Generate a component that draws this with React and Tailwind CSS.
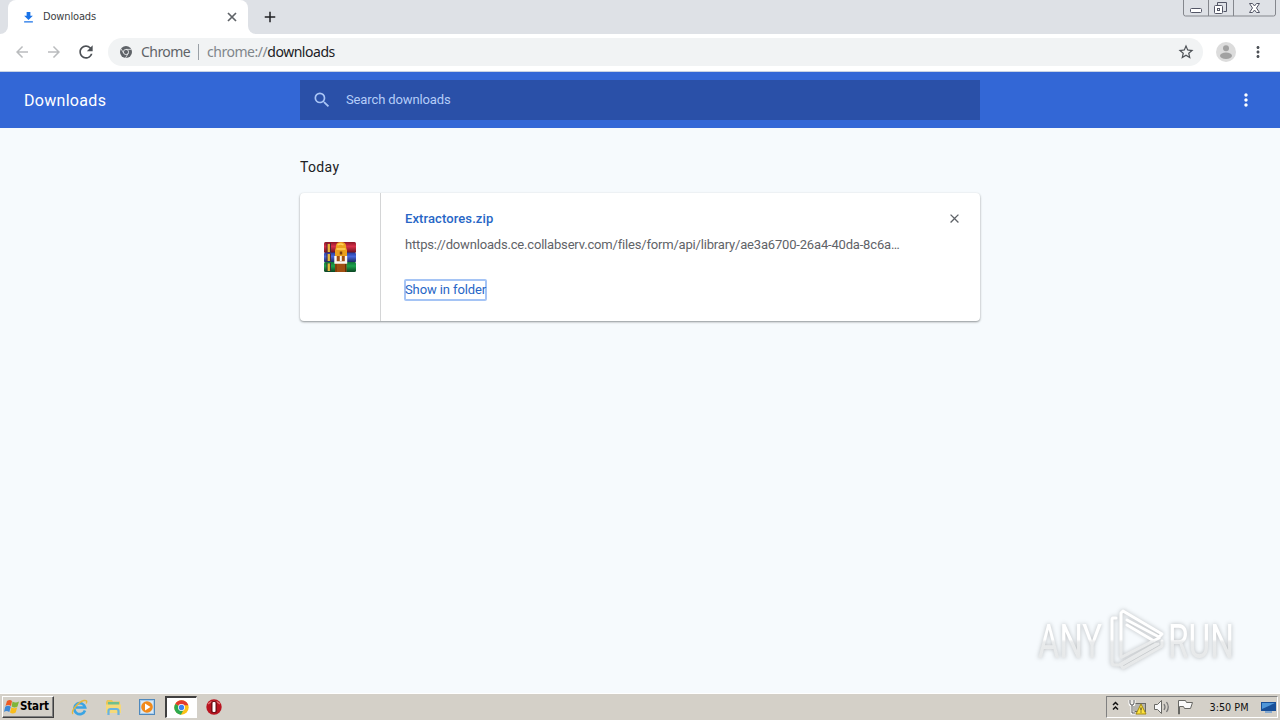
import React from 'react';
import { MdArrowBack, MdArrowForward, MdRefresh, MdStarBorder, MdMoreVert, MdSearch, MdClose, MdAdd, MdFileDownload } from 'react-icons/md';

const url = 'https://downloads.ce.collabserv.com/files/form/api/library/ae3a6700-26a4-40da-8c6a…';

const ChromeMono = () => (
  <svg className="w-3 h-3" viewBox="0 0 24 24">
    <circle cx="12" cy="12" r="12" fill="#5f6368" />
    <circle cx="12" cy="12" r="5.2" fill="none" stroke="#f1f3f4" strokeWidth="1.6" />
    <path d="M12 6.8h11M7.5 14.6L2 5.5M16.5 14.6L11 24" stroke="#f1f3f4" strokeWidth="1.5" />
  </svg>
);

const ChromeIcon = () => (
  <svg className="w-[15px] h-[15px]" viewBox="0 0 48 48">
    <circle cx="24" cy="24" r="23" fill="#fbc116" />
    <path d="M24 24L4 12.500A23 23 0 0 1 44 12.500L46 17H24z" fill="#e33b2e" />
    <path d="M4 12.500A23 23 0 0 0 22 47L32 29 24 24z" fill="#2da94f" />
    <circle cx="24" cy="24" r="11" fill="#fff" />
    <circle cx="24" cy="24" r="8.500" fill="#3e82f1" />
  </svg>
);

const WinRarIcon = () => (
  <svg className="w-8 h-8" viewBox="0 0 32 32">
    <defs>
      <linearGradient id="red" x2="0" y2="1">
        <stop offset="0" stopColor="#8c1626" />
        <stop offset=".4" stopColor="#d8304a" />
        <stop offset="1" stopColor="#65101c" />
      </linearGradient>
      <linearGradient id="blue" x2="0" y2="1">
        <stop offset="0" stopColor="#273c9c" />
        <stop offset=".4" stopColor="#4666db" />
        <stop offset="1" stopColor="#1b2459" />
      </linearGradient>
      <linearGradient id="green" x2="0" y2="1">
        <stop offset="0" stopColor="#12733a" />
        <stop offset=".4" stopColor="#1da34c" />
        <stop offset="1" stopColor="#0b4422" />
      </linearGradient>
    </defs>
    <rect y="1" width="32" height="11" rx="1.500" fill="url(#red)" />
    <rect y="11.500" width="32" height="10" rx="1.500" fill="url(#blue)" />
    <rect y="21" width="32" height="10" rx="1.500" fill="url(#green)" />
    <path d="M3 2v9M3 12.500v8M3 22v8M6.500 2v9M6.500 12.500v8M6.500 22v8" stroke="#4a2a32" />
    <path d="M4.800 3v8M4.800 13v7M4.800 22.500v7.500" stroke="#e8bb3a" strokeWidth="2.200" />
    <rect x="11" y="14" width="11.500" height="17" fill="#a14f12" />
    <path d="M11 15V9q1-2 1-4 0-4 5-4t5 4q0 2 1 4v6z" fill="#eca11d" />
    <path d="M13.500 4q3-2 6 0M12.500 8h9" fill="none" stroke="#ffd45c" strokeWidth="1.500" />
    <path d="M17 10.500v3" stroke="#7c3e0c" strokeWidth="2.500" />
    <path d="M11.500 15v6.500h10.500V15" fill="none" stroke="#fbf8f2" strokeWidth="2.400" />
    <path d="M16.800 15v5" stroke="#fbf8f2" strokeWidth="2" />
    <path d="M12 23v8M21.500 23v8" stroke="#693009" />
  </svg>
);

const Avatar = () => (
  <svg className="w-5 h-5" viewBox="0 0 20 20">
    <circle cx="10" cy="10" r="10" fill="#dcdcdc" />
    <circle cx="10" cy="6.200" r="3" fill="#a1a1a1" />
    <ellipse cx="10" cy="13.700" rx="6" ry="3.200" fill="#a1a1a1" />
  </svg>
);

const WindowButtons = () => (
  <svg className="w-[93px] h-[17px] mr-1" viewBox="0 0 93 17" fill="none">
    <path d="M.5 0v14q0 2 2 2h88q2 0 2-2V0M25.500 0v16M50.500 0v16" stroke="#84878d" />
    <rect x="7.500" y="8.500" width="11" height="4" rx="1" stroke="#535666" fill="#fff" />
    <path d="M34.500 5.500v-3h9v9h-3" stroke="#535666" />
    <rect x="31.500" y="5.500" width="8" height="8" rx="1" stroke="#535666" fill="#fff" />
    <rect x="34.500" y="8.500" width="2" height="2" stroke="#535666" />
    <path d="M66.500 3.500h3l2 2.500 2-2.500h3L73.500 8l3 4.500h-3l-2-2.500-2 2.500h-3l3-4.500z" stroke="#535666" fill="#fff" />
  </svg>
);

const StartFlag = () => (
  <svg className="w-4 h-4" viewBox="0 0 16 16">
    <path d="M3 2q3-2 5 0L7 7Q4 5 1.500 7z" fill="#ed5a23" />
    <path d="M8.500 2.500q3 2 6.500 0L13.500 7.500q-3 2-5.800 0z" fill="#7fb539" />
    <path d="M1.200 7.800q3-2 5.600 0l-1.500 5.200q-3-2-5.300 0z" fill="#3d88d5" />
    <path d="M7.500 8.300q3 2 5.700 0l-1.500 5.200q-3 2-5.700 0z" fill="#f9bd1c" />
  </svg>
);

const ExplorerE = () => (
  <svg className="w-[17px] h-[17px]" viewBox="0 0 17 17" fill="none">
    <path d="M14 11.500A5.500 5.500 0 1 1 14.200 8.500H5" stroke="#3ba4e3" strokeWidth="2.600" />
    <path d="M2 15C-1 13 7 3 13 1.500q4-.5 2.200 3" stroke="#e6b73b" strokeWidth="1.400" />
  </svg>
);

const FolderIcon = () => (
  <svg className="w-[17px] h-[17px]" viewBox="0 0 17 17">
    <path d="M1 3l1-2h5l1 1.500h7V14H1z" fill="#e9c65b" />
    <path d="M3 3h11v4H3z" fill="#6fbf8e" />
    <path d="M1 5.500h15V14H1z" fill="#f5d97a" />
    <path d="M3.500 16v-4q0-2 2-2h6q2 0 2 2v4" fill="none" stroke="#69b3df" strokeWidth="2.200" />
  </svg>
);

const MediaIcon = () => (
  <svg className="w-4 h-4" viewBox="0 0 16 16">
    <rect x=".5" y=".5" width="15" height="15" fill="#a9cdec" stroke="#4f89bd" />
    <rect x="2" y="2" width="12" height="12" fill="#d9e9f5" />
    <circle cx="8" cy="8" r="5.800" fill="#f18a1b" />
    <path d="M6 4.500v7L11.500 8z" fill="#fff" />
  </svg>
);

const OperaIcon = () => (
  <svg className="w-4 h-4" viewBox="0 0 16 16">
    <circle cx="8" cy="8" r="7.700" fill="#b91420" />
    <path d="M2 5a7 5 0 0 1 12 0" fill="none" stroke="#e26b6c" strokeWidth="1.500" />
    <rect x="5" y="2" width="6" height="12" rx="2" fill="#731017" />
    <rect x="6.500" y="3" width="3" height="10" rx="1" fill="#fff" />
  </svg>
);

const Watermark = () => (
  <svg className="absolute left-[1030px] top-[600px] w-[250px] h-20 drop-shadow-[0_0_2px_rgba(0,0,0,0.25)]" viewBox="0 0 250 80">
    <defs>
      <linearGradient id="fade" gradientUnits="userSpaceOnUse" x1="0" y1="20" x2="0" y2="66">
        <stop offset="0" stopColor="#fff" />
        <stop offset=".42" stopColor="#fff" />
        <stop offset=".48" stopColor="#e9ebec" />
        <stop offset="1" stopColor="#e6e8e9" />
      </linearGradient>
    </defs>
    <g fill="url(#fade)" fontFamily="Roboto" fontSize="49">
      <text x="8" y="58" textLength="64" lengthAdjust="spacingAndGlyphs">ANY</text>
      <text x="138" y="58" textLength="66" lengthAdjust="spacingAndGlyphs">RUN</text>
    </g>
    <g fill="none" stroke="url(#fade)" strokeWidth="3" strokeLinejoin="round" strokeLinecap="round">
      <path d="M86 18h-3q-1 0-1 2v42q0 3 3 3h4L126 44" />
      <path d="M91 57V13l2-2L132 34l-3 3L97 20" />
      <path d="M97 25L124 41M92 57L129 38M93 68L132 46v-5M93 68l-2-3 37-21" />
    </g>
  </svg>
);

const TabStrip = () => (
  <div className="flex h-[34px] bg-[#dee1e6] justify-between">
    <div className="flex">
      <div className="w-2 bg-white"><div className="h-full rounded-br-lg bg-[#dee1e6]" /></div>
      <div className="flex items-center w-60 bg-white rounded-t-lg pl-[13px] pr-[9px]">
        <MdFileDownload className="w-[15px] h-[15px] text-[#1a73e8]" />
        <span className="flex-1 ml-[7px] font-['DejaVu_Sans_Condensed','DejaVu_Sans'] text-[11px] tracking-[-0.15px] text-[#3c4043]">Downloads</span>
        <svg className="w-[14px] h-[14px]" viewBox="0 0 14 14">
          <path d="M3 3l8 8M11 3l-8 8" stroke="#5f6368" strokeWidth="1.700" />
        </svg>
      </div>
      <div className="w-2 bg-white"><div className="h-full rounded-bl-lg bg-[#dee1e6]" /></div>
      <MdAdd className="w-[18px] h-[18px] mt-2 ml-[5px] text-[#202124]" />
    </div>
    <WindowButtons />
  </div>
);

const Toolbar = () => (
  <div className="flex items-center h-[38px] pb-px bg-white border-b border-[#c9d3e4] pl-[13px]">
    <MdArrowBack className="w-[18px] h-[18px] text-[#babcbe]" />
    <MdArrowForward className="w-[18px] h-[18px] ml-[14px] text-[#babcbe]" />
    <MdRefresh className="w-5 h-5 ml-[13px] text-[#4d5156]" />
    <div className="flex items-center w-[1095px] h-7 ml-3 pl-3 pr-[8px] rounded-full bg-[#f1f3f4] font-['Noto_Sans'] text-sm leading-none whitespace-nowrap">
      <ChromeMono />
      <span className="w-[49px] ml-[9px] text-[#5f6368] tracking-[-0.55px]">Chrome</span>
      <span className="w-px h-4 mx-2 bg-[#9aa0a6]" />
      <span className="text-[#80868b] tracking-[-0.47px]">chrome://<span className="text-[#202124]">downloads</span></span>
      <MdStarBorder className="w-[18px] h-[18px] ml-auto text-[#4d5156]" />
    </div>
    <div className="ml-[13px]"><Avatar /></div>
    <MdMoreVert className="w-[18px] h-[18px] ml-[13px] text-[#4d5156]" />
  </div>
);

const DownloadCard = () => (
  <div className="flex h-32 bg-white rounded-[4px] shadow-[0_1px_2px_rgba(60,64,67,0.45),0_1px_3px_rgba(60,64,67,0.15)]">
    <div className="flex items-center justify-center w-[81px] border-r border-[#d4d5d6]">
      <WinRarIcon />
    </div>
    <div className="flex-1 pl-6 pt-[18px] text-[13px] leading-4">
      <div className="font-medium text-[#2766c6] tracking-[0.1px]">Extractores.zip</div>
      <div className="mt-[10px] text-[#5f6368] tracking-[-0.18px] whitespace-nowrap">{url}</div>
      <button className="block mt-[26px] -ml-px w-[83px] h-[22px] border-2 border-[#a5c4f5] rounded-[2px] text-[#2766c6] whitespace-nowrap leading-4">
        <span className="-ml-px tracking-[-0.1px]">Show in folder</span>
      </button>
    </div>
    <MdClose className="w-[15px] h-[15px] mt-[18px] mr-[18.500px] text-[#5f6368]" />
  </div>
);

const Tray = () => (
  <div className="flex items-center w-[172px] h-[22px] border border-t-[#808080] border-l-[#808080] border-r-white border-b-white mr-[2px] pl-1">
    <svg className="w-[150px] h-5" viewBox="0 0 150 20" fill="none">
      <path d="M2 8l2.500-2.500L7 8M2 12.500L4.500 10 7 12.500" stroke="#111" strokeWidth="1.500" />
      <rect x="22.500" y="6.500" width="12" height="8" fill="#b5b4ae" stroke="#686864" />
      <path d="M19 3v3q0 2 2 2t2-2V3M21 8v8h3" stroke="#fff" strokeWidth="3" />
      <path d="M19 3v3q0 2 2 2t2-2V3M21 8v8h3" stroke="#555" />
      <path d="M30 7l5 10H25z" fill="#ffe33c" stroke="#a58a10" />
      <path d="M30 10.500v3M30 14.500v1" stroke="#222" />
      <path d="M43.500 7.500h3l4-4v13l-4-4h-3z" fill="#f8f8f8" stroke="#686864" />
      <path d="M53 7q2 3 0 6M55.500 5q3.500 5 0 10" stroke="#777" strokeWidth="1.300" />
      <path d="M67.500 17V3.500h7l1 2h6l-2 6h-6l-1-2h-4V17z" fill="#fafafa" stroke="#686864" />
      <text x="98.500" y="14" fill="#111" fontFamily="DejaVu Sans Condensed, DejaVu Sans" fontSize="11" textLength="39" lengthAdjust="spacingAndGlyphs">3:50 PM</text>
    </svg>
    <svg className="w-[15px] h-4 shrink-0" viewBox="0 0 15 16">
      <path d="M0 3h15v9H0z" fill="#184f98" />
      <path d="M1 4h13L1 10z" fill="#4f96d8" />
      <path d="M4 12h7v2H4z" fill="#85a9cf" />
    </svg>
  </div>
);

const Taskbar = () => (
  <div className="flex items-center h-[27px] bg-[#d4d0c8] border-t border-white">
    <div className="flex items-center w-[52px] h-[22px] ml-[2px] pl-px border border-t-white border-l-white border-r-[#404040] border-b-[#404040] shadow-[inset_-1px_-1px_0_#808080]">
      <StartFlag />
      <span className="font-['DejaVu_Sans_Condensed','DejaVu_Sans'] font-bold text-[11.5px] tracking-[-0.15px] text-black">Start</span>
    </div>
    <div className="flex items-center ml-[17px]">
      <ExplorerE />
      <div className="ml-[17px]"><FolderIcon /></div>
      <div className="ml-[17px]"><MediaIcon /></div>
      <div className="flex items-center justify-center w-8 h-[22px] ml-[10px] bg-white border-t-2 border-l-2 border-r border-b border-t-[#404040] border-l-[#404040] border-r-white border-b-white">
        <ChromeIcon />
      </div>
      <div className="ml-[9px]"><OperaIcon /></div>
    </div>
    <div className="ml-auto"><Tray /></div>
  </div>
);

export default function App() {
  return (
    <div className="relative flex flex-col w-[1280px] h-[720px] overflow-hidden bg-[#f6fafd] font-['Roboto',sans-serif]">
      <TabStrip />
      <Toolbar />
      <header className="flex items-center h-14 bg-[#3367d6]">
        <h1 className="w-[300px] pl-6 pt-0.5 text-base tracking-[0.3px] text-white">Downloads</h1>
        <div className="flex items-center w-[680px] h-10 pl-3 bg-[#2a50a8]">
          <MdSearch className="w-5 h-5 text-[#a9c5f6]" />
          <span className="ml-[14px] text-[13px] tracking-[-0.12px] text-[#b5cdf8]">Search downloads</span>
        </div>
        <MdMoreVert className="w-5 h-5 ml-auto mr-6 text-white" />
      </header>
      <main className="flex-1 w-[680px] mx-auto pt-[29px]">
        <h2 className="mb-4 text-sm leading-5 tracking-[0.35px] text-[#202124]">Today</h2>
        <DownloadCard />
      </main>
      <Taskbar />
      <Watermark />
    </div>
  );
}
